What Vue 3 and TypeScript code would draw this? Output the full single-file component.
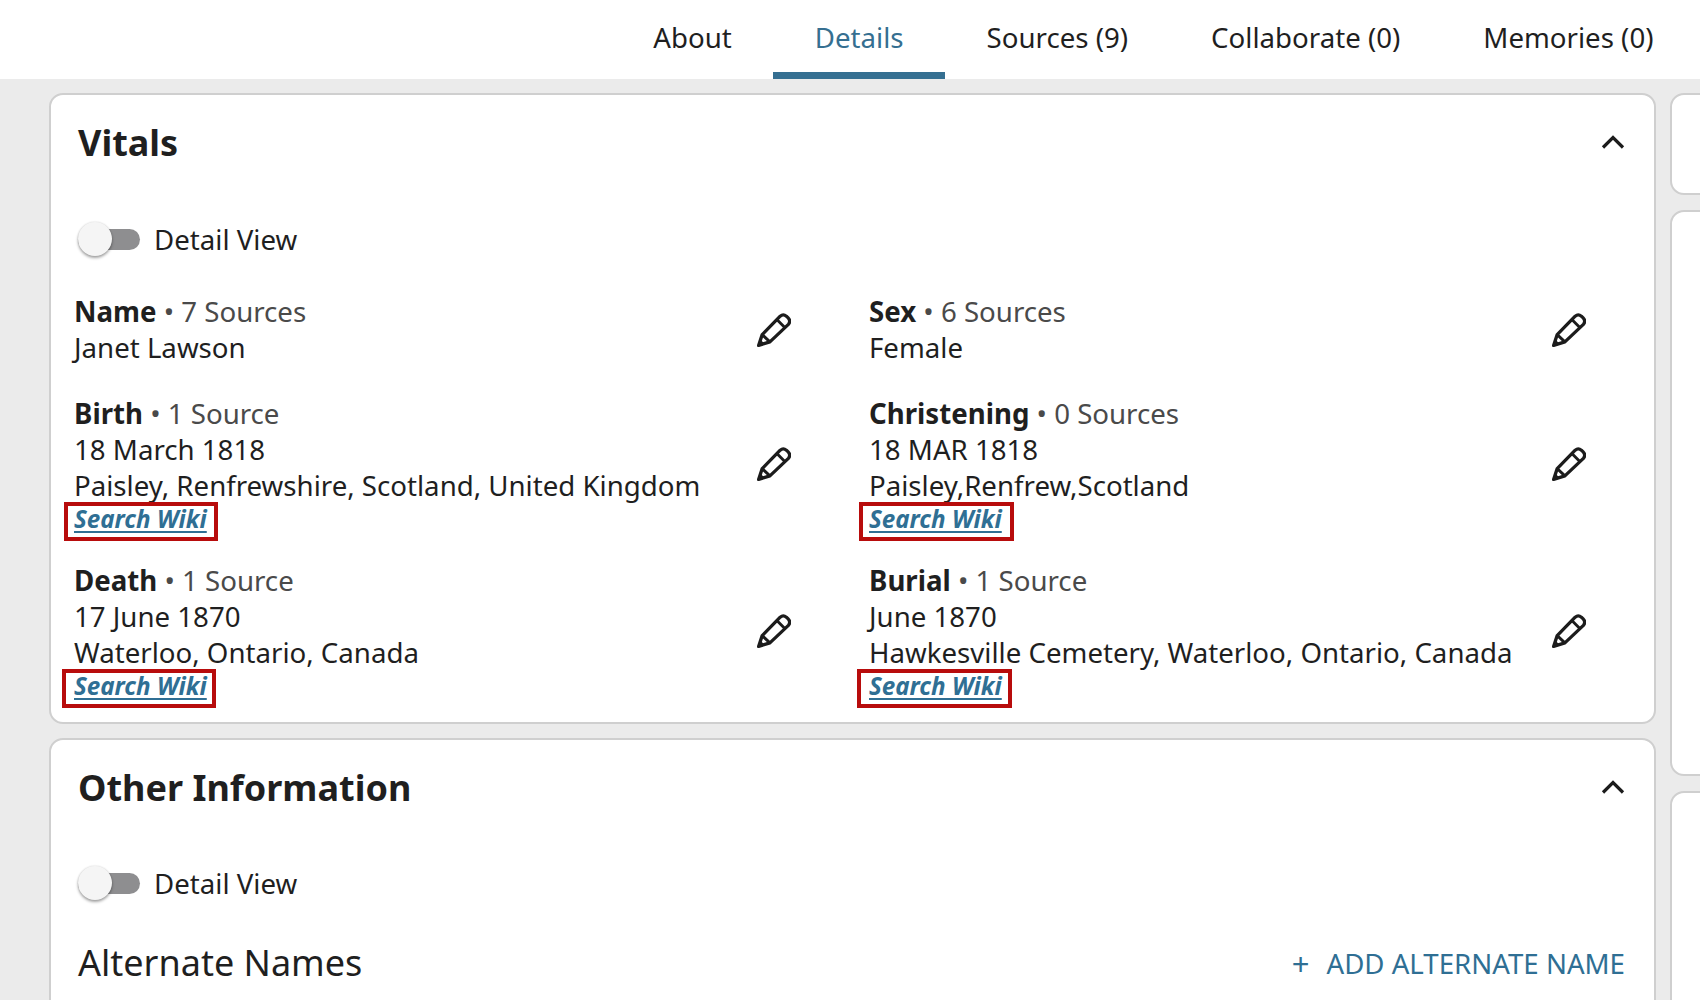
<script setup lang="ts">
interface Vital {
  label: string
  sources: string
  lines: string[]
  wiki?: string
}
const tabs = ['About', 'Details', 'Sources (9)', 'Collaborate (0)', 'Memories (0)']
const vitals: Vital[] = [
  { label: 'Name', sources: '7 Sources', lines: ['Janet Lawson'] },
  { label: 'Sex', sources: '6 Sources', lines: ['Female'] },
  { label: 'Birth', sources: '1 Source', lines: ['18 March 1818', 'Paisley, Renfrewshire, Scotland, United Kingdom'], wiki: 'box-a' },
  { label: 'Christening', sources: '0 Sources', lines: ['18 MAR 1818', 'Paisley,Renfrew,Scotland'], wiki: 'box-b' },
  { label: 'Death', sources: '1 Source', lines: ['17 June 1870', 'Waterloo, Ontario, Canada'], wiki: 'box-c' },
  { label: 'Burial', sources: '1 Source', lines: ['June 1870', 'Hawkesville Cemetery, Waterloo, Ontario, Canada'], wiki: 'box-d' },
]
</script>

<template>
  <div class="page">
    <header class="tabs">
      <div v-for="t in tabs" :key="t" class="tab" :class="{ active: t === 'Details' }">{{ t }}</div>
    </header>
    <div class="content">
      <main class="main">
        <section class="card vitals">
          <div class="card-head">
            <h2>Vitals</h2>
            <svg class="chev" viewBox="0 0 24 14" width="24" height="14"><path d="M2 12.5 L12 2.5 L22 12.5" fill="none" stroke="#1c1c1c" stroke-width="3.2" /></svg>
          </div>
          <div class="toggle-row">
            <span class="toggle"><span class="thumb"></span></span>
            <span class="toggle-label">Detail View</span>
          </div>
          <div class="grid">
            <div v-for="v in vitals" :key="v.label" class="cell">
              <div class="cell-text">
                <div><b>{{ v.label }}</b><span class="src"> • {{ v.sources }}</span></div>
                <div v-for="l in v.lines" :key="l">{{ l }}</div>
                <div v-if="v.wiki" class="wiki-line">
                  <a class="wiki">Search Wiki<span class="box" :class="v.wiki"></span></a>
                </div>
              </div>
              <svg class="pencil" viewBox="0 0 34 36" width="35" height="37">
                <path d="M2.5 33.5 L6 23 L23.5 5 Q26.5 2.5 29.5 5 L31.5 7 Q34 10 31.5 13 L13.5 30 Z" fill="none" stroke="#1c1c1c" stroke-width="3.2" stroke-linejoin="round" />
                <path d="M20.5 8.5 L28 16 M6 23 L13.5 30" fill="none" stroke="#1c1c1c" stroke-width="2.8" />
                <path d="M2.5 33.5 L4 27.5 L8.5 32 Z" fill="#1c1c1c" />
              </svg>
            </div>
          </div>
        </section>
        <section class="card other">
          <div class="card-head">
            <h2>Other Information</h2>
            <svg class="chev" viewBox="0 0 24 14" width="24" height="14"><path d="M2 12.5 L12 2.5 L22 12.5" fill="none" stroke="#1c1c1c" stroke-width="3.2" /></svg>
          </div>
          <div class="toggle-row">
            <span class="toggle"><span class="thumb"></span></span>
            <span class="toggle-label">Detail View</span>
          </div>
          <div class="alt-row">
            <h3>Alternate Names</h3>
            <a class="add"><span class="plus">+</span>ADD ALTERNATE NAME</a>
          </div>
        </section>
      </main>
      <aside class="side">
        <div class="card s1"></div>
        <div class="card s2"></div>
        <div class="card s3"></div>
      </aside>
    </div>
  </div>
</template>

<style>
html, body { margin: 0; background: #ebebeb; }
</style>

<style scoped>
.page {
  width: 1700px;
  height: 1000px;
  overflow: hidden;
  background: #ebebeb;
  font-family: "Noto Sans", "Open Sans", sans-serif;
  font-size: 27.65px;
  line-height: 36px;
  color: #1f1f1f;
}
.tabs {
  height: 79px;
  box-sizing: border-box;
  background: #fff;
  display: flex;
  justify-content: flex-end;
  padding-right: 5px;
}
.tab {
  padding: 19px 41.5px 0;
  box-sizing: border-box;
  height: 79px;
}
.tab.active {
  color: #356f91;
  border-bottom: 7px solid #356f91;
}
.content {
  display: flex;
  gap: 14px;
  padding: 14px 0 0 49px;
}
.main {
  width: 1607px;
  flex: none;
  display: flex;
  flex-direction: column;
  gap: 14px;
}
.card {
  background: #fff;
  border: 2px solid #cfcfcf;
  border-radius: 14px;
  box-sizing: border-box;
}
.card-head {
  display: flex;
  justify-content: space-between;
  align-items: center;
  height: 50px;
  padding: 0 29px 0 27px;
  margin-top: 23px;
}
h2 {
  margin: 0;
  font-size: 36px;
  font-weight: 700;
  line-height: 50px;
}
.chev { margin-top: -2px; }
.toggle-row {
  display: flex;
  align-items: center;
  margin: 54px 0 0 27px;
  height: 34px;
}
.toggle {
  position: relative;
  width: 62px;
  height: 21px;
  background: #8e8e90;
  border-radius: 11px;
  display: block;
}
.thumb {
  position: absolute;
  left: 0;
  top: -7px;
  width: 34px;
  height: 34px;
  border-radius: 50%;
  background: #f5f5f5;
  box-shadow: 0 2px 3px rgba(0, 0, 0, 0.35), 0 0 2px rgba(0, 0, 0, 0.15);
}
.toggle-label { margin-left: 14px; }
.grid {
  display: grid;
  grid-template-columns: 795px 795px;
  row-gap: 30px;
  margin: 37px 0 0 23px;
  padding-bottom: 23px;
}
.cell {
  display: flex;
  align-items: center;
}
.cell-text { width: 683px; flex: none; white-space: nowrap; }
.src { color: #4a4a4a; }
b { font-weight: 700; }
.pencil { flex: none; margin-left: -1px; }
.wiki-line { height: 29px; line-height: 30px; }
.wiki {
  position: relative;
  display: inline-block;
  top: -1px;
  font-size: 24.2px;
  font-weight: 700;
  font-style: italic;
  color: #2f6f94;
  text-decoration: underline;
  text-decoration-thickness: 2px;
  text-underline-offset: 3px;
}
.box {
  position: absolute;
  top: -2px;
  bottom: -7px;
  border: 4px solid #b80c0c;
  box-sizing: border-box;
}
.box-a { left: -10px; right: -11px; }
.box-b { left: -10px; right: -12px; }
.box-c { left: -12px; right: -9px; }
.box-d { left: -12px; right: -10px; }
.other { height: 400px; }
.other .toggle-row { margin-top: 53px; }
.alt-row {
  display: flex;
  justify-content: space-between;
  align-items: center;
  margin-top: 40px;
  padding: 0 29px 0 27px;
}
h3 {
  margin: 0;
  font-size: 36px;
  font-weight: 400;
  line-height: 46px;
}
.add {
  color: #2f6f94;
  display: flex;
  align-items: center;
}
.plus { margin-right: 17px; font-size: 31px; }
.side {
  flex: none;
  width: 100px;
  display: flex;
  flex-direction: column;
  gap: 15px;
}
.s1 { height: 102px; }
.s2 { height: 566px; }
.s3 { height: 300px; }
</style>
